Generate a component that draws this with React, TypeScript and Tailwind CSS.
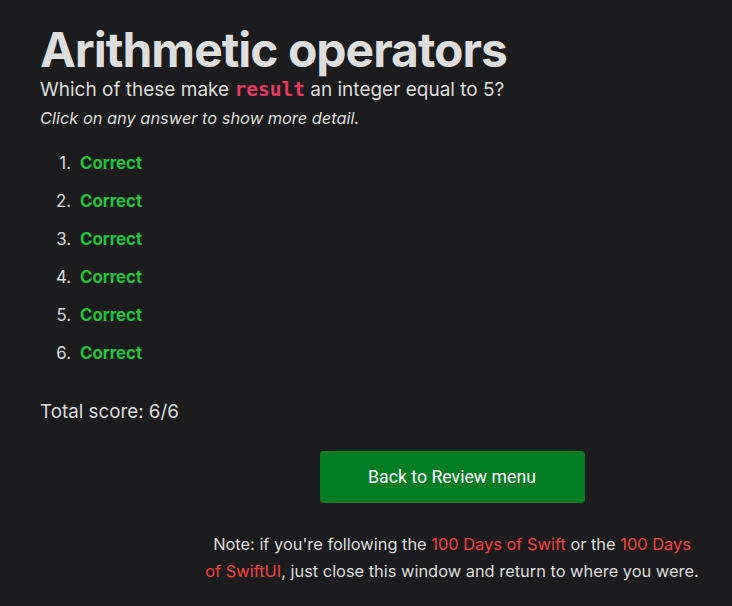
export default function App() {
  const items = [1, 2, 3, 4, 5, 6];
  return (
    <div className="min-h-[606px] w-full bg-[#1c1c1e] text-[#dcdcdc] font-['Inter',sans-serif] px-[40px] pt-[22px]">
      <h1 className="text-[48px] font-bold leading-[56px] tracking-[-1px] text-[#dedede]">Arithmetic operators</h1>
      <p className="text-[19px] leading-[26px] -mt-[1px]">
        Which of these make{" "}
        <code className="font-['DejaVu_Sans_Mono',monospace] font-bold text-[#e83a62] text-[19.5px]">result</code>{" "}
        an integer equal to 5?
      </p>
      <p className="text-[16.4px] italic leading-[24px] mt-[3px]">Click on any answer to show more detail.</p>
      <ol className="mt-[21px] flex flex-col gap-[14px]">
        {items.map((n) => (
          <li key={n} className="flex text-[16.8px] leading-[24px]">
            <span className="w-[40px] text-right pr-[9px]">{n}.</span>
            <span className="font-bold text-[#1fc43b]">Correct</span>
          </li>
        ))}
      </ol>
      <p className="mt-[34px] text-[18.8px] leading-[26px]">Total score: 6/6</p>
      <div className="w-[520px] ml-[152px] mt-[26px] flex flex-col items-center">
        <button className="w-[265px] h-[52px] rounded-[4px] bg-[#007c25] text-white text-[17.7px] font-['Roboto',sans-serif]">
          Back to Review menu
        </button>
        <p className="mt-[28px] text-center text-[16.4px] leading-[27px]">
          Note: if you're following the <span className="text-[#f5403f]">100 Days of Swift</span> or the{" "}
          <span className="text-[#f5403f]">100 Days</span>
          <br />
          <span className="text-[#f5403f]">of SwiftUI</span>, just close this window and return to where you were.
        </p>
      </div>
    </div>
  );
}
